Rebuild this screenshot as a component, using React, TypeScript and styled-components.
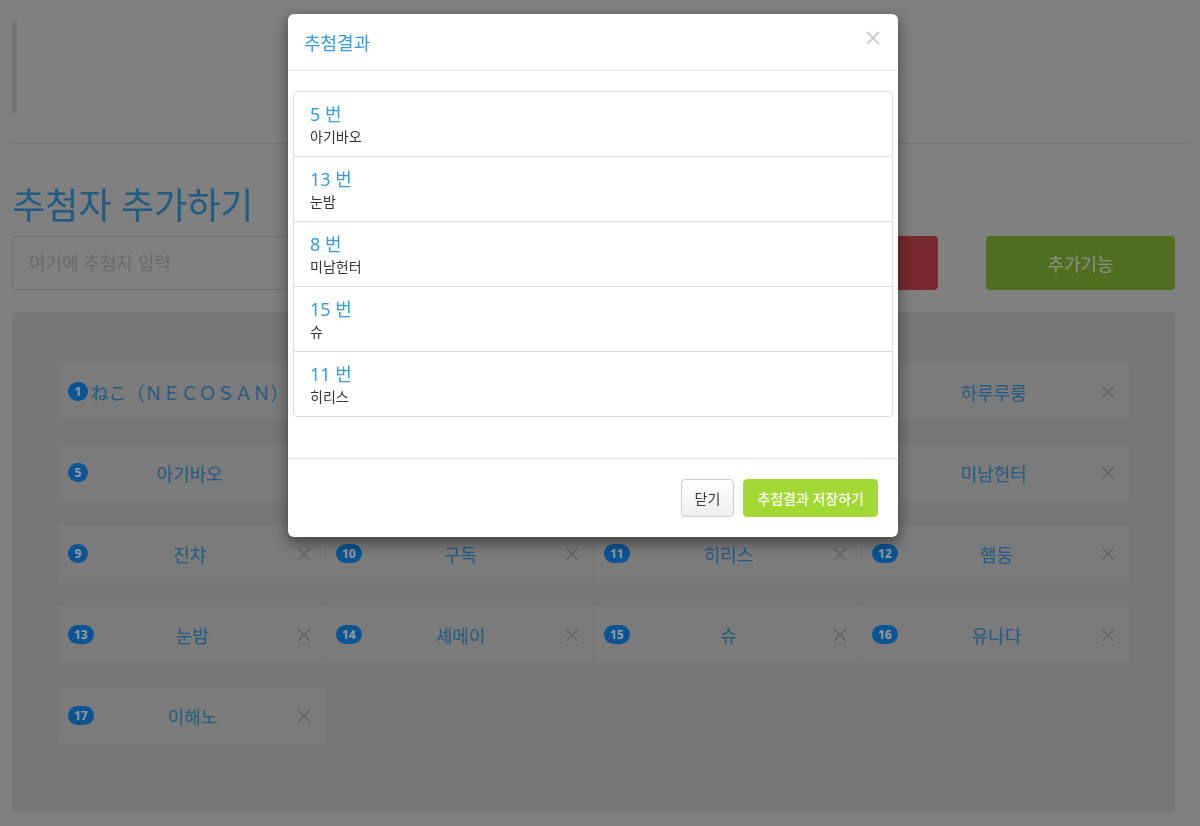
import React from "react";
import styled, { createGlobalStyle } from "styled-components";

const GlobalStyle = createGlobalStyle`
  body {
    margin: 0;
    background: #d5d5d5;
    font-family: "Noto Sans", "Noto Sans CJK KR", sans-serif;
    color: #333;
  }
  * {
    box-sizing: border-box;
  }
`;

const Page = styled.div`
  min-height: 100vh;
  padding: 22px 12px 14px;
`;

const Quote = styled.blockquote`
  margin: 0 0 30px;
  height: 91px;
  border-left: 5px solid #c1c1c1;
`;

const Rule = styled.hr`
  margin: 0;
  border: 0;
  border-top: 1px solid #c1c1c1;
`;

const AddSection = styled.section`
  display: grid;
  grid-template-columns: 1fr 189px 189px;
  column-gap: 48px;
  margin: 40px 13px 0 0;
`;

const Title = styled.h1<{ $wide?: boolean }>`
  grid-column: ${({ $wide }) => ($wide ? "2 / span 2" : "1")};
  margin: 0 0 8px;
  font-size: 36px;
  font-weight: 400;
  line-height: 44px;
  color: #3a9ad9;
  white-space: nowrap;
`;

const NameInput = styled.input`
  height: 54px;
  padding: 0 16px;
  border: 1px solid #b7b7b7;
  border-radius: 4px;
  background: transparent;
  font: inherit;
  font-size: 18px;
  &::placeholder {
    color: #b2b2b2;
  }
`;

const ActionButton = styled.button<{ $tone: "red" | "green" }>`
  height: 54px;
  border: 0;
  border-radius: 4px;
  background: ${({ $tone }) => ($tone === "red" ? "#c64650" : "#85b932")};
  color: #e9e9e9;
  font: inherit;
  font-size: 18px;
`;

const Panel = styled.div`
  display: grid;
  grid-template-columns: repeat(4, 1fr);
  column-gap: 1px;
  row-gap: 24px;
  margin: 22px 13px 0 0;
  padding: 51px 46px 68px;
  border-radius: 4px;
  background: #c6c6c6;
`;

const Card = styled.div`
  display: flex;
  align-items: center;
  height: 57px;
  padding: 0 14px 0 10px;
  background: #cdcdcd;
  border-radius: 2px;
`;

const Badge = styled.span`
  flex: none;
  min-width: 20px;
  height: 19px;
  padding: 0 6px;
  border-radius: 10px;
  background: #128cf5;
  color: #fff;
  font-size: 12px;
  font-weight: 700;
  line-height: 19px;
  text-align: center;
`;

const CardName = styled.span`
  flex: 1;
  min-width: 0;
  padding: 0 1px;
  font-size: 18px;
  color: #3a9ad9;
  text-align: center;
  white-space: nowrap;
`;

const Cross = ({ size, color, stroke }: { size: number; color: string; stroke: number }) => (
  <svg width={size} height={size} viewBox="0 0 14 14" fill="none">
    <path d="M1 1L13 13M13 1L1 13" stroke={color} strokeWidth={stroke} />
  </svg>
);

const RemoveButton = styled.span`
  display: flex;
  flex: none;
  margin-left: 6px;
`;

const Backdrop = styled.div`
  position: fixed;
  inset: 0;
  background: rgba(0, 0, 0, 0.4);
`;

const Dialog = styled.div`
  width: 610px;
  margin: 14px 0 0 288px;
  background: #fff;
  border-radius: 6px;
  box-shadow: 0 5px 15px rgba(0, 0, 0, 0.5);
`;

const DialogHeader = styled.div`
  display: flex;
  align-items: center;
  justify-content: space-between;
  height: 57px;
  padding: 0 18px 0 16px;
  border-bottom: 1px solid #e5e5e5;
`;

const DialogTitle = styled.h4`
  margin: 0;
  font-size: 18px;
  font-weight: 400;
  color: #3a9ad9;
`;

const CloseIcon = styled.span`
  display: flex;
  margin-bottom: 8px;
`;

const DialogBody = styled.div`
  padding: 20px 5px 41px;
`;

const ResultList = styled.ul`
  margin: 0;
  padding: 0;
  list-style: none;
  border: 1px solid #ddd;
  border-radius: 4px;
`;

const ResultItem = styled.li`
  height: 65px;
  padding: 9px 16px 0;
  border-top: 1px solid #ddd;
  &:first-child {
    border-top: 0;
    height: 64px;
  }
`;

const ResultNumber = styled.div`
  font-size: 18px;
  line-height: 26px;
  color: #3a9ad9;
`;

const ResultName = styled.div`
  font-size: 14px;
  line-height: 20px;
  color: #333;
`;

const DialogFooter = styled.div`
  display: flex;
  justify-content: flex-end;
  gap: 9px;
  padding: 20px;
  border-top: 1px solid #e5e5e5;
`;

const FooterButton = styled.button<{ $primary?: boolean }>`
  height: 38px;
  padding: 0 ${({ $primary }) => ($primary ? 13 : 13)}px;
  border: 1px solid ${({ $primary }) => ($primary ? "#a2d935" : "#ccc")};
  border-radius: 4px;
  background: ${({ $primary }) =>
    $primary ? "#a2d935" : "linear-gradient(#fff, #eeeeee)"};
  color: ${({ $primary }) => ($primary ? "#fff" : "#333")};
  font: inherit;
  font-size: 14px;
  font-weight: ${({ $primary }) => ($primary ? 500 : 400)};
`;

const entrants = [
  "ねこ（ＮＥＣＯＳＡＮ）",
  "토리",
  "라온",
  "하루루룽",
  "아기바오",
  "모모",
  "나비",
  "미남헌터",
  "진챠",
  "구독",
  "히리스",
  "햄둥",
  "눈밤",
  "셰메이",
  "슈",
  "유나다",
  "이해노",
];

const winners = [5, 13, 8, 15, 11];

const App = () => {
  return (
    <>
      <GlobalStyle />
      <Page>
        <Quote />
        <Rule />
        <AddSection>
          <Title>추첨자 추가하기</Title>
          <Title $wide>추첨 기능</Title>
          <NameInput placeholder="여기에 추첨자 입력" />
          <ActionButton $tone="red">추첨하기</ActionButton>
          <ActionButton $tone="green">추가기능</ActionButton>
        </AddSection>
        <Panel>
          {entrants.map((name, i) => (
            <Card key={i}>
              <Badge>{i + 1}</Badge>
              <CardName>{name}</CardName>
              <RemoveButton>
                <Cross size={14} color="#a8a8a8" stroke={1.6} />
              </RemoveButton>
            </Card>
          ))}
        </Panel>
      </Page>
      <Backdrop>
        <Dialog>
          <DialogHeader>
            <DialogTitle>추첨결과</DialogTitle>
            <CloseIcon>
              <Cross size={14} color="#c2c2c2" stroke={1.6} />
            </CloseIcon>
          </DialogHeader>
          <DialogBody>
            <ResultList>
              {winners.map((n) => (
                <ResultItem key={n}>
                  <ResultNumber>{n} 번</ResultNumber>
                  <ResultName>{entrants[n - 1]}</ResultName>
                </ResultItem>
              ))}
            </ResultList>
          </DialogBody>
          <DialogFooter>
            <FooterButton>닫기</FooterButton>
            <FooterButton $primary>추첨결과 저장하기</FooterButton>
          </DialogFooter>
        </Dialog>
      </Backdrop>
    </>
  );
};

export default App;
